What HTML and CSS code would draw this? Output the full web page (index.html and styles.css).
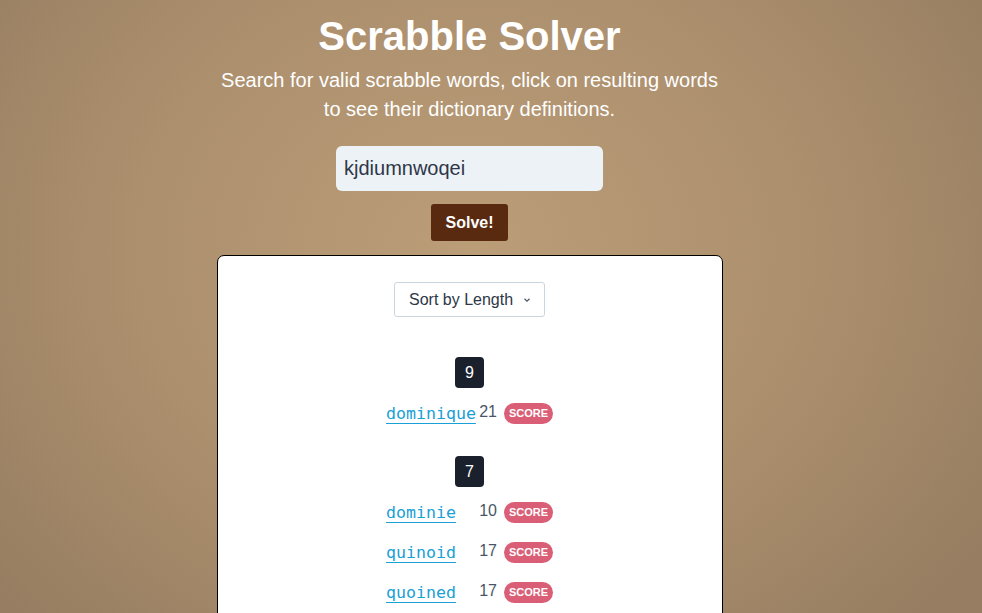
FILE: index.html
```html
<!DOCTYPE html>
<html lang="en">
<head>
<meta charset="utf-8">
<title>Scrabble Solver</title>
<link rel="stylesheet" href="styles.css">
</head>
<body>
<main class="page">
  <h1 class="title">Scrabble Solver</h1>
  <p class="subtitle">Search for valid scrabble words, click on resulting words to see their dictionary definitions.</p>
  <input class="letters" type="text" value="kjdiumnwoqei">
  <button class="solve">Solve!</button>
  <section class="card">
    <div class="select">
      <span>Sort by Length</span>
      <svg class="chev" width="8" height="6" viewBox="0 0 8 6"><path d="M1.5 1.8 L4 4.2 L6.5 1.8" fill="none" stroke="#4a5568" stroke-width="1.2"/></svg>
    </div>
    <div class="results">
      <div class="group">
        <div class="len">9</div>
        <div class="rows">
          <a class="word" href="#">dominique</a><span class="num">21</span><span class="score">SCORE</span>
        </div>
      </div>
      <div class="group">
        <div class="len">7</div>
        <div class="rows">
          <a class="word" href="#">dominie</a><span class="num">10</span><span class="score">SCORE</span>
          <a class="word" href="#">quinoid</a><span class="num">17</span><span class="score">SCORE</span>
          <a class="word" href="#">quoined</a><span class="num">17</span><span class="score">SCORE</span>
        </div>
      </div>
    </div>
  </section>
</main>
</body>
</html>
```
FILE: styles.css
```css
html, body {
  margin: 0;
  height: 100%;
  overflow: hidden;
}
body {
  background: radial-gradient(ellipse 620px 520px at 470px 250px, #bb9d78 0%, #ac8f6d 55%, #977e62 100%);
  background-color: #977e62;
  font-family: "Liberation Sans", Arial, sans-serif;
}
.page {
  display: flex;
  flex-direction: column;
  align-items: center;
  padding: 13px 43px 0 0;
}
.title {
  margin: 0;
  font-size: 40px;
  line-height: 46px;
  font-weight: 700;
  color: #fff;
}
.subtitle {
  margin: 7px 0 0;
  width: 510px;
  text-align: center;
  font-size: 20px;
  line-height: 29px;
  color: #fff;
}
.letters {
  margin-top: 22px;
  width: 267px;
  height: 45px;
  box-sizing: border-box;
  border: none;
  border-radius: 6px;
  background: #edf2f7;
  padding: 0 8px;
  font-family: "Liberation Sans", Arial, sans-serif;
  font-size: 20px;
  color: #2d3748;
  outline: none;
}
.solve {
  margin-top: 13px;
  width: 77px;
  height: 37px;
  border: none;
  border-radius: 3px;
  background: #5a2a10;
  color: #fff;
  font-family: "Liberation Sans", Arial, sans-serif;
  font-size: 16px;
  font-weight: 700;
  padding: 0;
}
.card {
  margin-top: 14px;
  width: 506px;
  box-sizing: border-box;
  height: 400px;
  background: #fff;
  border: 1px solid #000;
  border-radius: 7px;
  display: flex;
  flex-direction: column;
  align-items: center;
  padding-top: 26px;
}
.select {
  width: 151px;
  height: 35px;
  box-sizing: border-box;
  border: 1px solid #cbd5e0;
  border-radius: 3px;
  display: flex;
  align-items: center;
  padding: 0 0 0 14px;
  gap: 10px;
  font-size: 16px;
  color: #2d3748;
}
.chev {
  display: block;
}
.results {
  margin-top: 40px;
  display: flex;
  flex-direction: column;
  align-items: center;
  gap: 23px;
}
.group {
  display: flex;
  flex-direction: column;
  align-items: center;
}
.len {
  width: 29px;
  height: 31px;
  border-radius: 4px;
  background: #1a202c;
  color: #fff;
  font-size: 16px;
  display: flex;
  align-items: center;
  justify-content: center;
  margin-bottom: 5px;
}
.rows {
  display: grid;
  grid-template-columns: 90px 21px 56px;
  grid-auto-rows: 40px;
  align-items: center;
}
.word {
  font-family: "DejaVu Sans Mono", monospace;
  font-size: 16.6px;
  color: #1a9fd6;
  text-decoration: underline;
  text-underline-offset: 4px;
  line-height: 20px;
  position: relative;
  top: 1px;
}
.num {
  font-size: 16px;
  color: #4a5568;
  text-align: right;
  position: relative;
  top: -1px;
}
.score {
  margin-left: 7px;
  width: 49px;
  height: 21px;
  border-radius: 11px;
  background: #d95e76;
  color: #fff;
  font-size: 11px;
  font-weight: 700;
  display: flex;
  align-items: center;
  justify-content: center;
}
```
